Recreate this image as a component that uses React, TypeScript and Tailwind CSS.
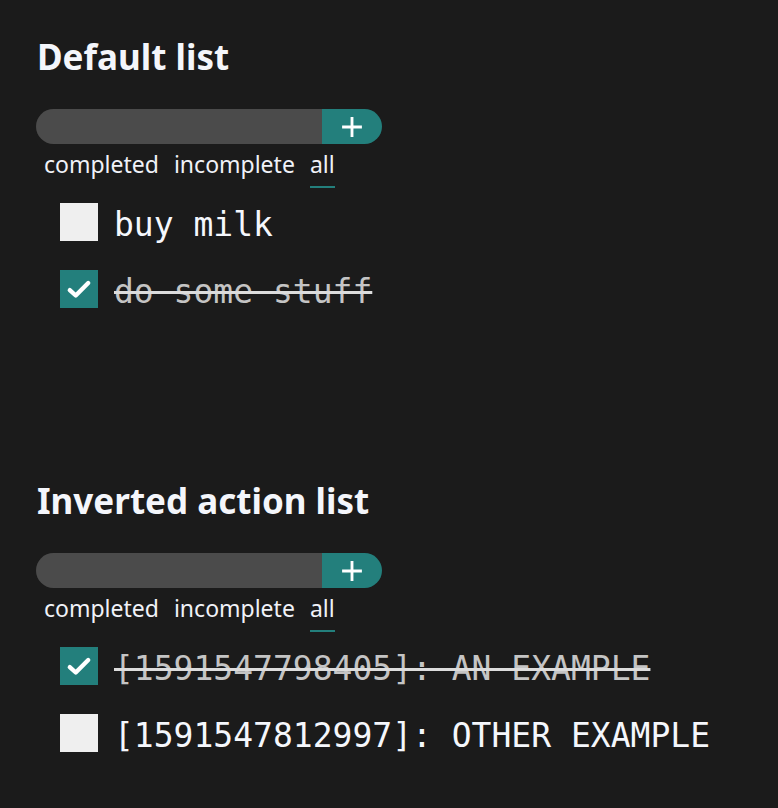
import { useState } from 'react'

type Todo = { id: number; text: string; done: boolean }

const FILTERS = ['completed', 'incomplete', 'all'] as const
type Filter = (typeof FILTERS)[number]

function Check() {
  return (
    <svg viewBox="0 0 24 24" className="h-[26px] w-[26px]" fill="none" stroke="white" strokeWidth="4" strokeLinecap="round" strokeLinejoin="round">
      <path d="M3.5 13l5.5 5L20.5 6.5" />
    </svg>
  )
}

function TodoList({ title, initial }: { title: string; initial: Todo[] }) {
  const [todos, setTodos] = useState(initial)
  const [filter, setFilter] = useState<Filter>('all')
  const [draft, setDraft] = useState('')

  const shown = todos.filter((t) => (filter === 'all' ? true : filter === 'completed' ? t.done : !t.done))

  const add = () => {
    if (!draft.trim()) return
    setTodos([...todos, { id: Date.now(), text: draft, done: false }])
    setDraft('')
  }

  return (
    <section className="pl-[36px]">
      <h2 className="text-[35px] font-bold leading-none text-[#f4f6fb] font-['Noto_Sans',sans-serif] pt-[39px] pl-[1px]">{title}</h2>

      <div className="mt-[35px] flex h-[35px] w-[346px] overflow-hidden rounded-full">
        <input
          value={draft}
          onChange={(e) => setDraft(e.target.value)}
          className="h-full flex-1 bg-[#4b4b4b] px-4 text-white outline-none"
        />
        <button type="button" onClick={add} className="flex h-full w-[60px] items-center justify-center bg-[#237f7c]">
          <svg viewBox="0 0 20 20" className="h-[22px] w-[22px]" stroke="white" strokeWidth="2.6">
            <path d="M10 1v18M1 10h18" />
          </svg>
        </button>
      </div>

      <nav className="mt-[6px] flex gap-[15px] pl-[8px] text-[23px] leading-[28px] text-[#f0f2f8] font-['Noto_Sans',sans-serif]">
        {FILTERS.map((f) => (
          <button
            key={f}
            type="button"
            onClick={() => setFilter(f)}
            className={`border-b-2 pb-[8px] ${filter === f ? 'border-[#237f7c]' : 'border-transparent'}`}
          >
            {f}
          </button>
        ))}
      </nav>

      <ul className="mt-[15px] flex flex-col gap-[29px] pl-[24px]">
        {shown.map((t) => (
          <li key={t.id} className="flex h-[38px] items-center gap-[16px]">
            <button
              type="button"
              onClick={() => setTodos(todos.map((x) => (x.id === t.id ? { ...x, done: !x.done } : x)))}
              className={`flex h-[38px] w-[38px] shrink-0 items-center justify-center ${t.done ? 'bg-[#237f7c]' : 'bg-[#efefef]'}`}
            >
              {t.done && <Check />}
            </button>
            <span
              className={`h-[38px] text-[33px] leading-[44px] font-['DejaVu_Sans_Mono',monospace] ${
                t.done ? 'text-[#c4c4c4] line-through decoration-[#dcdcdc] decoration-[3px]' : 'text-[#f5f7fc]'
              }`}
            >
              {t.text}
            </span>
          </li>
        ))}
      </ul>
    </section>
  )
}

export default function App() {
  return (
    <div className="min-h-[808px] bg-[#1b1b1b]">
      <TodoList
        title="Default list"
        initial={[
          { id: 1, text: 'buy milk', done: false },
          { id: 2, text: 'do some stuff', done: true },
        ]}
      />
      <div className="h-[136px]" />
      <TodoList
        title="Inverted action list"
        initial={[
          { id: 3, text: '[1591547798405]: AN EXAMPLE', done: true },
          { id: 4, text: '[1591547812997]: OTHER EXAMPLE', done: false },
        ]}
      />
    </div>
  )
}
